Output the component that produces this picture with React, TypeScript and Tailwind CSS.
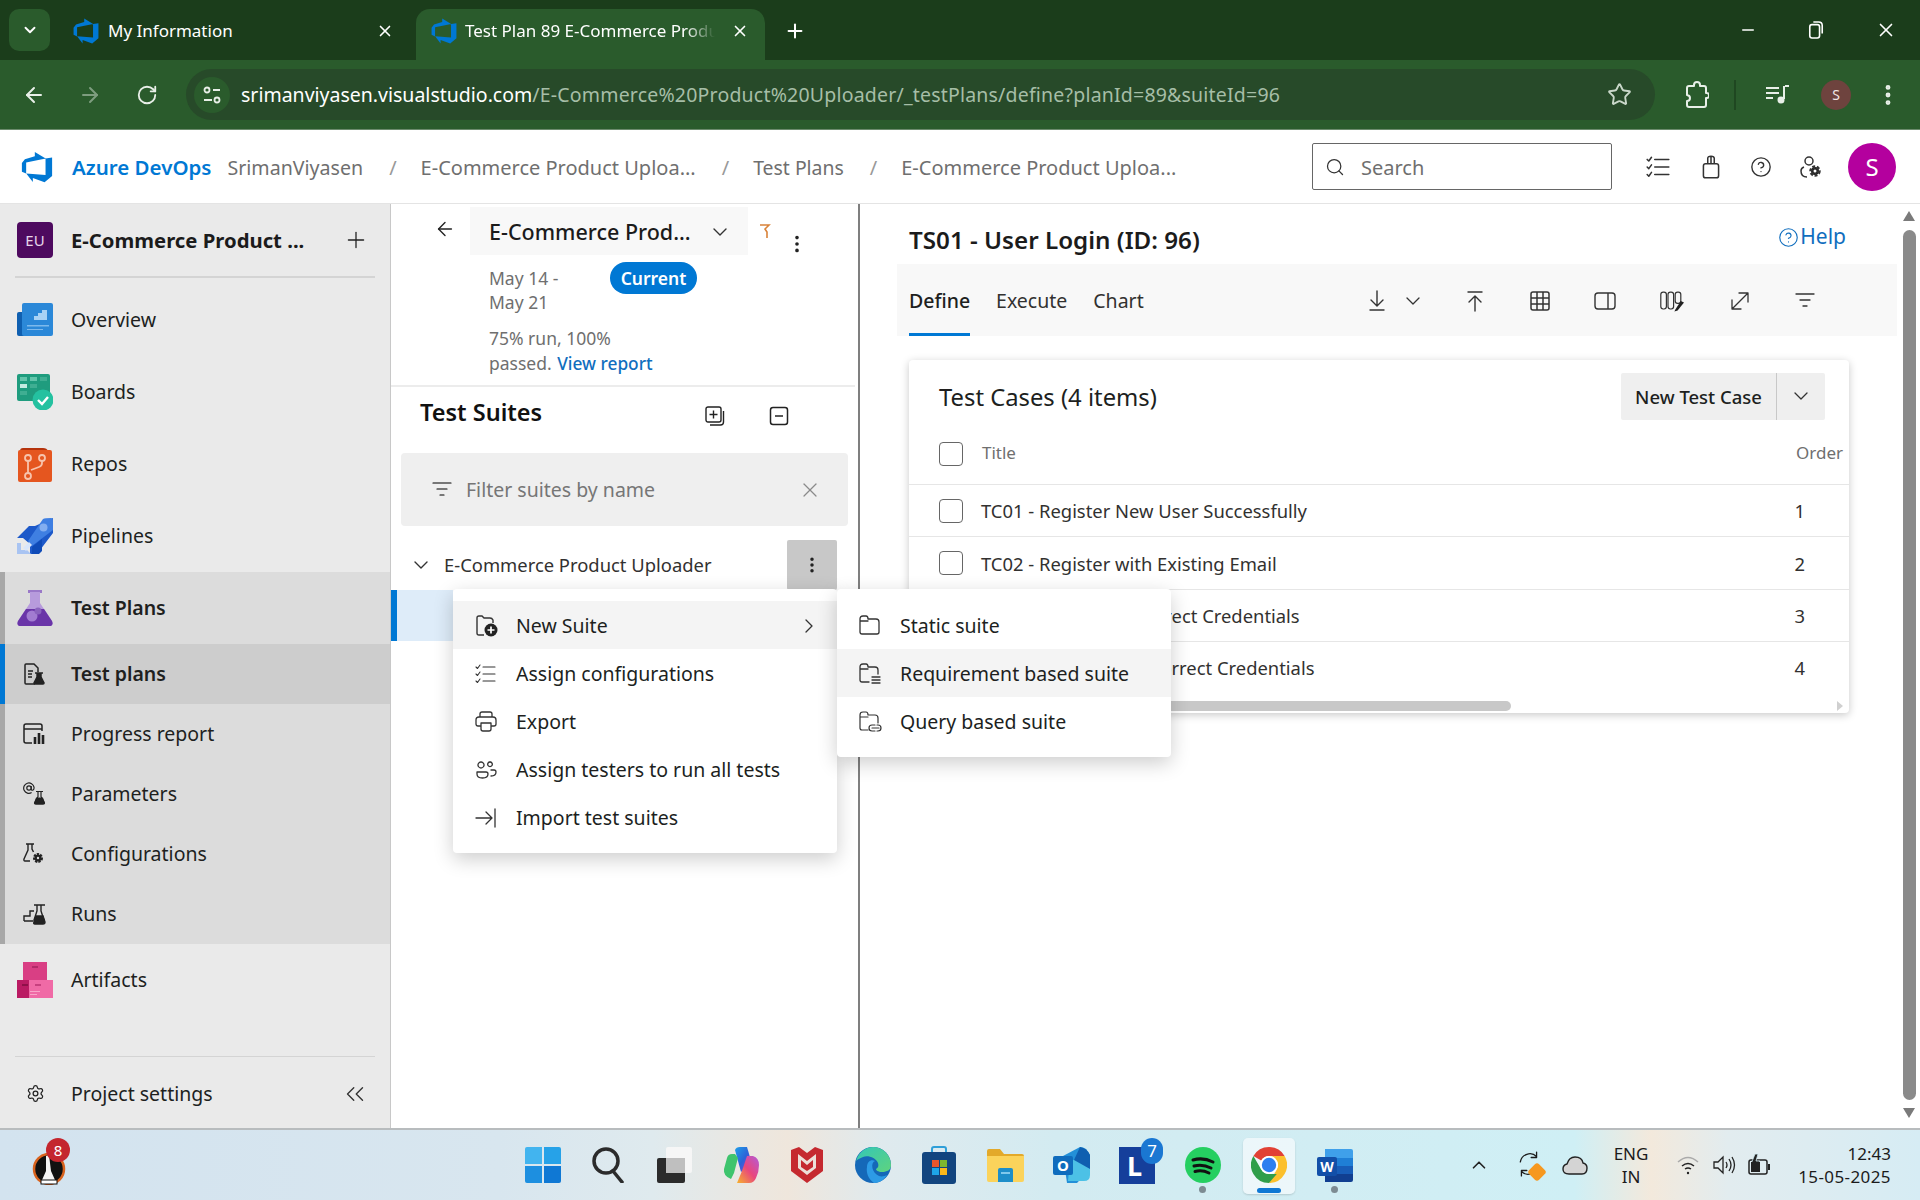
import {
  ArrowLeft,
  ArrowRight,
  ChevronDown,
  ChevronRight,
  ChevronUp,
  ChevronsLeft,
  CircleHelp,
  EllipsisVertical,
  Minus,
  Plus,
  RotateCw,
  Search,
  Settings,
  Star,
  X,
} from "lucide-react";

function AzureLogo({ className }: { className?: string }) {
  return (
    <svg viewBox="0 0 18 18" className={className} fill="#0078d4">
      <path d="M17 4v9.74l-4 3.28-6.2-2.26V17l-3.51-4.59 10.23.8V4.44zm-3.41.49L7.85 1v2.29L2.58 4.84 1 6.87v4.61l2.26 1V6.57z" />
    </svg>
  );
}

function Line({ d, size = 24, box = 24, w = 1.5 }: { d: string; size?: number; box?: number; w?: number }) {
  return (
    <svg width={size} height={size} viewBox={`0 0 ${box} ${box}`} fill="none" stroke="currentColor" strokeWidth={w} strokeLinecap="round" strokeLinejoin="round">
      <path d={d} />
    </svg>
  );
}

function OverviewIcon() {
  return (
    <svg width="36" height="36" viewBox="0 0 36 36">
      <rect x="0" y="10" width="12" height="24" rx="2" fill="#0f5fb0" />
      <rect x="5" y="1" width="31" height="33" rx="2" fill="#2b88d8" />
      <path d="M12 18h5v-4h4v-3h4v-3h5v10z" fill="#a8d2f5" />
      <path d="M10 23h22v1.5H10zM10 27h16v1H10z" fill="#7db9ec" />
    </svg>
  );
}
function BoardsIcon() {
  return (
    <svg width="36" height="36" viewBox="0 0 36 36">
      <rect x="0" y="0" width="33" height="27" rx="2" fill="#1f9c7e" />
      <rect x="3" y="3" width="7" height="4" fill="#63c5ab" />
      <rect x="13" y="3" width="7" height="4" fill="#63c5ab" />
      <rect x="23" y="3" width="7" height="4" fill="#3fae92" />
      <rect x="3" y="10" width="7" height="4" fill="#c3ebe0" />
      <rect x="13" y="10" width="7" height="4" fill="#3fae92" />
      <rect x="3" y="17" width="7" height="4" fill="#3fae92" />
      <circle cx="26" cy="26" r="10.5" fill="#24c1a0" />
      <path d="M21 26l4 4 6-7" fill="none" stroke="#fff" strokeWidth="2.4" />
    </svg>
  );
}
function ReposIcon() {
  return (
    <svg width="36" height="36" viewBox="0 0 36 36">
      <path d="M3 5q0-3 3-3h20q4 0 5 3z" fill="#b5330c" />
      <rect x="1" y="4" width="34" height="32" rx="2" fill="#e5561f" />
      <g fill="none" stroke="#f7c3ac" strokeWidth="1.8">
        <circle cx="11" cy="12" r="3" />
        <circle cx="25" cy="12" r="3" />
        <circle cx="11" cy="30" r="3" />
        <path d="M11 15v12M25 15v2q0 3-3 4l-8 3" />
      </g>
    </svg>
  );
}
function PipelinesIcon() {
  return (
    <svg width="36" height="36" viewBox="0 0 36 36">
      <path d="M36 0v15L20 36H13V26L6 20H0l12-12h6z" fill="#1d59c9" />
      <path d="M11 23L26 1q2-1 8-1 2 0 2 2v10L15 28z" fill="#3f7fe2" />
      <path d="M22 36l3-3v-12l-10 8v7z" fill="#0f4bb8" />
      <circle cx="26.5" cy="9.5" r="4" fill="#83aef0" />
      <path d="M0 36V25h4v7h6l4 4z" fill="#a9c4f2" />
      <path d="M6 30l6-6 3 3-6 6z" fill="#d9e6fb" />
    </svg>
  );
}
function FlaskIcon() {
  return (
    <svg width="36" height="36" viewBox="0 0 36 36">
      <rect x="11" y="0" width="14" height="3" fill="#9a78c8" />
      <path d="M13 2h10v11l12 18q2 5-3 5H4q-5 0-3-5l12-18z" fill="#b79bdc" />
      <path d="M9 19h18l8 12q2 5-3 5H4q-5 0-3-5z" fill="#6a35a8" />
      <circle cx="15" cy="26" r="5.5" fill="#a27cd1" />
      <circle cx="21" cy="21" r="3.5" fill="#8a63bd" />
    </svg>
  );
}
function ArtifactsIcon() {
  return (
    <svg width="36" height="36" viewBox="0 0 36 36">
      <rect x="6" y="0" width="24" height="18" fill="#d93f84" />
      <rect x="0" y="18" width="14" height="18" fill="#ba1b63" />
      <rect x="12" y="18" width="24" height="18" fill="#f06aa6" />
      <rect x="15" y="4" width="6" height="2" fill="#b32a69" />
      <rect x="5" y="22" width="6" height="2" fill="#8f1049" />
      <rect x="18" y="22" width="6" height="2" fill="#c7417f" />
      <path d="M13 29h10v1H13zM13 32h7v1h-7z" fill="#f9a6c9" />
    </svg>
  );
}

function SubIcon({ kind }: { kind: string }) {
  if (kind === "plans")
    return (
      <svg width="22" height="22" viewBox="0 0 22 22" fill="none" stroke="#222" strokeWidth="1.5">
        <path d="M12 21H3q-1 0-1-1V2q0-1 1-1h8l4 4v4" />
        <path d="M5 8h5M5 11h4M5 14h4" />
        <path d="M12 10h8M14 10v4l-3 6q0 1 1 1h8q1 0 1-1l-3-6v-4" fill="#222" />
      </svg>
    );
  if (kind === "report")
    return (
      <svg width="22" height="22" viewBox="0 0 22 22" fill="none" stroke="#222" strokeWidth="1.5">
        <path d="M9 20H3q-2 0-2-2V3q0-2 2-2h14q2 0 2 2v5M1 6h18" />
        <path d="M12 21v-7M16 21V10M20 21v-9" strokeWidth="2.6" />
      </svg>
    );
  if (kind === "params")
    return (
      <svg width="24" height="24" viewBox="0 0 24 24" fill="none" stroke="#222" strokeWidth="1.2">
        <circle cx="6" cy="6" r="2.2" />
        <path d="M8.2 4v3q0 1.5 1.6 1.2 1.5-.6 1.2-3A5.2 5.2 0 1 0 8.6 10.6" />
        <path d="M13 9.5h7M15 9.5v5l-3 6q0 1.5 1 1.5h7q1 0 1-1.5l-3-6v-5" />
        <path d="M13.5 16h6l2 5q0 1-1 1h-8q-1 0-1-1z" fill="#222" />
      </svg>
    );
  if (kind === "config")
    return (
      <svg width="22" height="22" viewBox="0 0 22 22" fill="none" stroke="#222" strokeWidth="1.4">
        <path d="M3 1h8M5 1v6L1 16q-.5 2 1 2h5M9 1v5l1.5 3" />
        <circle cx="15" cy="15" r="3.5" fill="#222" strokeWidth="3" strokeDasharray="2 1" />
        <circle cx="15" cy="15" r="1.2" fill="#ddd" stroke="none" />
      </svg>
    );
  return (
    <svg width="24" height="22" viewBox="0 0 24 22" fill="none" stroke="#222" strokeWidth="1.4">
      <path d="M1 18v-5h6V8h4M1 18h9" />
      <path d="M11 2h11M14 2v6l-3 9q0 2 1 2h8q1 0 1-2l-3-9V2" />
      <path d="M13 13h7l2 6q0 2-2 2h-8q-2 0-1-2z" fill="#222" />
    </svg>
  );
}

function NavItem({ icon, label }: { icon: React.ReactNode; label: string }) {
  return (
    <div className="flex h-[72px] items-center pl-[17px]">
      <div className="flex w-[54px] shrink-0 items-center">{icon}</div>
      <span className="text-[19.5px] text-[#201f1e]">{label}</span>
    </div>
  );
}

function SubItem({ kind, label }: { kind: string; label: string }) {
  return (
    <div className="flex h-[60px] items-center border-l-[5px] border-[#0078d4] bg-[#cdcdcd] pl-[18px]">
      <div className="flex w-[48px] shrink-0 items-center">
        <SubIcon kind={kind} />
      </div>
      <span className="text-[19.5px] font-semibold text-[#201f1e]">{label}</span>
    </div>
  );
}

function SubItemPlain({ kind, label }: { kind: string; label: string }) {
  return (
    <div className="flex h-[60px] items-center pl-[18px]">
      <div className="flex w-[48px] shrink-0 items-center">
        <SubIcon kind={kind} />
      </div>
      <span className="text-[19.5px] text-[#201f1e]">{label}</span>
    </div>
  );
}

function Sidebar() {
  return (
    <aside className="flex w-[391px] shrink-0 flex-col border-r border-[#c8c8c8] bg-[#eaeaea]">
      <div className="flex h-[72px] items-center pl-[17px]">
        <div className="flex h-[36px] w-[36px] items-center justify-center rounded-[4px] bg-[#4e0a5f] text-[15px] text-[#e6d5ea]">EU</div>
        <span className="ml-[18px] text-[20.3px] font-bold text-[#1b1b1b]">E-Commerce Product ...</span>
        <Plus className="ml-auto mr-[21px] h-[26px] w-[26px] text-[#222]" strokeWidth={1.2} />
      </div>
      <div className="mx-[15px] h-[2px] bg-[#d4d4d4]" />
      <div className="h-[6px]" />
      <NavItem icon={<OverviewIcon />} label="Overview" />
      <NavItem icon={<BoardsIcon />} label="Boards" />
      <NavItem icon={<ReposIcon />} label="Repos" />
      <NavItem icon={<PipelinesIcon />} label="Pipelines" />
      <div className="border-l-[5px] border-[#a8a8a8] bg-[#dcdcdc]">
        <div className="flex h-[72px] items-center pl-[12px]">
          <div className="flex w-[54px] shrink-0 items-center">
            <FlaskIcon />
          </div>
          <span className="text-[19.5px] font-semibold text-[#201f1e]">Test Plans</span>
        </div>
        <div className="-ml-[5px]">
          <SubItem kind="plans" label="Test plans" />
        </div>
        <SubItemPlain kind="report" label="Progress report" />
        <SubItemPlain kind="params" label="Parameters" />
        <SubItemPlain kind="config" label="Configurations" />
        <SubItemPlain kind="runs" label="Runs" />
      </div>
      <NavItem icon={<ArtifactsIcon />} label="Artifacts" />
      <div className="mx-[15px] mt-auto h-px bg-[#d4d4d4]" />
      <div className="flex h-[71px] items-center pl-[26px] pt-[2px]">
        <Settings className="h-[19px] w-[19px] text-[#222]" strokeWidth={1.6} />
        <span className="ml-[26px] text-[19.5px] text-[#201f1e]">Project settings</span>
        <ChevronsLeft className="ml-auto mr-[20px] h-[30px] w-[30px] text-[#333]" strokeWidth={1.1} />
      </div>
    </aside>
  );
}

function SuitesPanel() {
  return (
    <section className="flex w-[469px] shrink-0 flex-col border-r-2 border-[#7f7f7f] bg-white">
      <div className="flex h-[51px] pl-[43px] pt-[3px]">
        <ArrowLeft className="mt-[11px] h-[22px] w-[22px] text-[#222]" strokeWidth={1.5} />
        <div className="ml-[14px] flex h-[48px] w-[278px] items-center bg-[#f8f8f8] pl-[19px] pt-[2px]">
          <span className="text-[21.5px] font-medium text-[#1b1b1b]">E-Commerce Prod...</span>
          <ChevronDown className="ml-auto mr-[16px] h-[24px] w-[24px] text-[#333]" strokeWidth={1.4} />
        </div>
        <svg width="12" height="16" viewBox="0 0 12 16" className="ml-[11px] mt-[16px]" fill="none" stroke="#d9833a" strokeWidth="1.6">
          <path d="M1 2h9L6 6l2 3v6" />
        </svg>
        <EllipsisVertical className="ml-[15px] mt-[26px] h-[22px] w-[22px] text-[#222]" strokeWidth={2} />
      </div>
      <div className="h-[132px] w-[464px] border-b-2 border-[#ececec] pl-[98px] text-[17.5px] leading-[24px] text-[#6f6f6f]">
        <div className="flex">
          <div className="w-[121px] pt-[11px]">
            May 14 -<br />
            May 21
          </div>
          <div className="mt-[7px] flex h-[32px] w-[87px] items-center justify-center rounded-full bg-[#0078d4] text-[17.5px] font-semibold text-white">Current</div>
        </div>
        <div className="mt-[12px] leading-[25px]">
          75% run, 100%
          <br />
          passed. <span className="ml-[1px] text-[17.3px] font-medium text-[#106ebe]">View report</span>
        </div>
      </div>
      <div className="flex h-[66px] items-center pb-[15px] pl-[29px]">
        <span className="text-[23.5px] font-semibold text-[#111]">Test Suites</span>
        <svg width="20" height="20" viewBox="0 0 20 20" className="ml-[163px] mt-[6px]" fill="none" stroke="#222" strokeWidth="1.4">
          <rect x="1" y="1" width="15" height="15" rx="2" />
          <path d="M8.5 4.5v8M4.5 8.5h8M18.5 5v11q0 3-3 3H5" />
        </svg>
        <svg width="20" height="20" viewBox="0 0 20 20" className="ml-[44px] mt-[7px]" fill="none" stroke="#222" strokeWidth="1.5">
          <rect x="1.5" y="1.5" width="17" height="17" rx="2.5" />
          <path d="M6 10h8" />
        </svg>
      </div>
      <div className="mx-[10px] flex h-[73px] w-[447px] items-center rounded-[4px] bg-[#efefef] pl-[31px]">
        <Line d="M1 3h18M5 9h10M8 15h4" size={20} box={20} w={1.2} />
        <span className="ml-[14px] text-[19.5px] text-[#767676]">Filter suites by name</span>
        <X className="ml-auto mr-[26px] h-[24px] w-[24px] text-[#8a8a8a]" strokeWidth={1.2} />
      </div>
      <div className="flex h-[64px] items-center pl-[18px] pt-[14px]">
        <ChevronDown className="h-[24px] w-[24px] text-[#333]" strokeWidth={1.4} />
        <span className="ml-[11px] text-[18.4px] text-[#323130]">E-Commerce Product Uploader</span>
        <div className="ml-auto mr-[21px] flex h-[50px] w-[50px] items-center justify-center rounded-[2px] bg-[#c8c8c8]">
          <EllipsisVertical className="h-[20px] w-[20px] text-[#222]" strokeWidth={2.2} />
        </div>
      </div>
      <div className="h-[51px] w-[62px] border-l-[6px] border-[#0078d4] bg-[#deecf9]" />
    </section>
  );
}

function MenuRow({ icon, label, active, chevron }: { icon: React.ReactNode; label: string; active?: boolean; chevron?: boolean }) {
  return (
    <div className={`flex h-[48px] items-center pl-[21px] pt-[1px] ${active ? "bg-[#f4f4f4]" : ""}`}>
      <div className="flex w-[42px] shrink-0 items-center text-[#333]">{icon}</div>
      <span className="text-[19.5px] text-[#201f1e]">{label}</span>
      {chevron && <ChevronRight className="ml-auto mr-[16px] h-[24px] w-[24px] text-[#333]" strokeWidth={1.3} />}
    </div>
  );
}

function Menus() {
  return (
    <>
      <div className="absolute left-[453px] top-[385px] w-[384px] rounded-[4px] bg-white py-[12px] shadow-[0_6px_20px_rgba(0,0,0,0.2)]">
        <MenuRow
          active
          chevron
          label="New Suite"
          icon={
            <svg width="24" height="24" viewBox="0 0 24 24" fill="none" stroke="#333" strokeWidth="1.4">
              <path d="M10 21H5q-2 0-2-2V4q0-2 2-2h3l2 2h6q2 0 3 2v3" />
              <circle cx="17" cy="16" r="6.5" fill="#222" stroke="none" />
              <path d="M17 12.5v7M13.5 16h7" stroke="#fff" strokeWidth="1.7" />
            </svg>
          }
        />
        <MenuRow label="Assign configurations" icon={<Line d="M2 5l1.5 1.5L6 3M2 12l1.5 1.5L6 10M2 19l1.5 1.5L6 17M9 5h12M9 12h12M9 19h12" w={1.1} />} />
        <MenuRow label="Export" icon={<Line d="M6 7V4q0-2 2-2h8q2 0 2 2v3M6 16H4q-2 0-2-2v-4q0-3 3-3h14q3 0 3 3v4q0 2-2 2h-2M7 13h10v6q0 2-2 2H9q-2 0-2-2z" w={1.3} />} />
        <MenuRow label="Assign testers to run all tests" icon={<Line d="M7 4a3 3 0 1 0 .01 0M16 4a2.3 2.3 0 1 0 .01 0M3 14h9q2 0 2 2 0 4-5.5 4T3 16q0-2 0-2zM17 12h3q2 0 2 2 0 4-5 4" w={1.3} />} />
        <MenuRow label="Import test suites" icon={<Line d="M2 12h15M12 6l6 6-6 6M21 3v18" w={1.3} />} />
      </div>
      <div className="absolute left-[837px] top-[385px] w-[334px] rounded-[4px] bg-white py-[12px] shadow-[0_6px_20px_rgba(0,0,0,0.2)]">
        <MenuRow label="Static suite" icon={<Line d="M2 18V5q0-3 3-3h3q2 0 2 3h8q3 0 3 3v10q0 2-2 2H4q-2 0-2-2zM2 7h8" w={1.3} />} />
        <MenuRow active label="Requirement based suite" icon={<Line d="M11 20H4q-2 0-2-2V5q0-3 3-3h3q2 0 2 3h7q3 0 3 3v4M2 7h8M14 15h8M14 18h8M14 21h8" w={1.3} />} />
        <MenuRow label="Query based suite" icon={<Line d="M10 20H4q-2 0-2-2V5q0-3 3-3h3q2 0 2 3h7q3 0 3 3v5M2 7h8M17 15h-3a3 3 0 0 0 0 6h3M19 15h1a3 3 0 0 1 0 6h-1M14 18h7" w={1.2} />} />
      </div>
    </>
  );
}

function ToolIcon({ children, className }: { children: React.ReactNode; className?: string }) {
  return <div className={`flex w-[24px] items-center justify-center text-[#333] ${className ?? ""}`}>{children}</div>;
}

function CaseRow({ title, order }: { title: string; order: number }) {
  return (
    <div className="flex h-[52.3px] items-center border-t border-[#e6e6e6] pl-[30px]">
      <div className="h-[24px] w-[24px] rounded-[4px] border border-[#666]" />
      <span className="ml-[18px] pt-[1px] text-[18.4px] text-[#323130]">{title}</span>
      <span className="ml-auto mr-[44px] pt-[1px] text-[18.4px] text-[#323130]">{order}</span>
    </div>
  );
}

function RightPanel() {
  return (
    <section className="flex flex-1 bg-white">
      <div className="w-[1041px] pl-[37px]">
        <div className="flex h-[60px] items-center pl-[12px] pr-[55px] pt-[12px]">
          <span className="text-[24.2px] font-semibold text-[#1b1b1b]">TS01 - User Login (ID: 96)</span>
          <span className="ml-auto flex items-center gap-[1px] pb-[6px] text-[21px] text-[#106ebe]">
            <CircleHelp className="h-[21px] w-[21px]" strokeWidth={1.3} />
            Help
          </span>
        </div>
        <div className="flex h-[72px] w-[1000px] items-center bg-[#f8f8f8] pl-[12px]">
          <div className="relative flex h-full items-center pt-[2px] text-[19.5px] font-medium text-[#201f1e]">
            Define
            <div className="absolute bottom-0 left-0 right-0 h-[3px] bg-[#0078d4]" />
          </div>
          <span className="ml-[26px] pt-[2px] text-[19.5px] text-[#323130]">Execute</span>
          <span className="ml-[26px] pt-[2px] text-[19.5px] text-[#323130]">Chart</span>
          <div className="flex items-center pt-[1px]">
            <ToolIcon className="ml-[221px]">
              <Line d="M12 2v14M6 11l6 6 6-6M5 21h14" w={1.4} />
            </ToolIcon>
            <ToolIcon className="ml-[12px]">
              <ChevronDown className="h-[24px] w-[24px]" strokeWidth={1.3} />
            </ToolIcon>
            <ToolIcon className="ml-[38px]">
              <Line d="M5 3h14M12 22V8M6 13l6-6 6 6" w={1.4} />
            </ToolIcon>
            <ToolIcon className="ml-[41px]">
              <Line d="M5 3h14q2 0 2 2v14q0 2-2 2H5q-2 0-2-2V5q0-2 2-2zM3 9h18M3 15h18M9 3v18M15 3v18" w={1.5} />
            </ToolIcon>
            <ToolIcon className="ml-[41px]">
              <Line d="M5 4h14q3 0 3 3v10q0 3-3 3H5q-3 0-3-3V7q0-3 3-3zM15 4v16" w={1.4} />
            </ToolIcon>
            <ToolIcon className="ml-[43px]">
              <svg width="30" height="26" viewBox="0 0 30 26" fill="none" stroke="#333" strokeWidth="1.5">
                <rect x="1" y="2" width="7" height="21" rx="3" />
                <rect x="10" y="2" width="7" height="21" rx="3" />
                <rect x="19" y="2" width="7" height="14" rx="3" />
                <path d="M19 24l7-11 4 2-8 10-4 1z" fill="#222" stroke="none" />
              </svg>
            </ToolIcon>
            <ToolIcon className="ml-[44px]">
              <Line d="M4 20L20 4M11 4h9v9M4 11v9h9" w={1.3} />
            </ToolIcon>
            <ToolIcon className="ml-[41px]">
              <Line d="M3 5h18M7 11h10M10 17h4" w={1.3} />
            </ToolIcon>
          </div>
        </div>
        <div className="ml-[12px] mt-[24px] h-[353px] w-[940px] rounded-[4px] bg-white shadow-[0_2px_8px_rgba(0,0,0,0.22)]">
          <div className="flex h-[72px] items-center pl-[30px] pr-[24px]">
            <span className="pt-[3px] text-[23.8px] text-[#201f1e]">Test Cases (4 items)</span>
            <div className="ml-auto flex h-[47px] w-[204px] items-center rounded-[2px] bg-[#efefef] text-[18.5px] font-medium text-[#201f1e]">
              <span className="flex h-full w-[156px] items-center justify-center border-r border-[#c8c8c8] pt-[1px]">New Test Case</span>
              <ChevronDown className="ml-[12px] h-[24px] w-[24px] text-[#333]" strokeWidth={1.3} />
            </div>
          </div>
          <div className="flex h-[52px] items-center pb-[8px] pl-[30px] pr-[6px]">
            <div className="h-[24px] w-[24px] rounded-[4px] border border-[#666]" />
            <span className="mb-[2px] ml-[19px] text-[17px] text-[#6f6f6f]">Title</span>
            <span className="mb-[2px] ml-auto text-[17px] text-[#6f6f6f]">Order</span>
          </div>
          <CaseRow title="TC01 - Register New User Successfully" order={1} />
          <CaseRow title="TC02 - Register with Existing Email" order={2} />
          <CaseRow title="TC03 - Login with Correct Credentials" order={3} />
          <CaseRow title="TC04 - Login with Incorrect Credentials" order={4} />
          <div className="mt-[8px] flex items-center pl-[32px] pr-[6px]">
            <div className="h-[10px] w-[570px] rounded-full bg-[#c8c8c8]" />
            <svg width="6" height="10" viewBox="0 0 6 10" className="ml-auto" fill="#d0d0d0">
              <path d="M0 0l6 5-6 5z" />
            </svg>
          </div>
        </div>
      </div>
      <div className="flex w-[16px] flex-col items-center pt-[7px]">
        <svg width="14" height="10" viewBox="0 0 14 10" fill="#7a7a7a">
          <path d="M7 0l6 10H1z" />
        </svg>
        <div className="mt-[9px] h-[870px] w-[13px] rounded-full bg-[#8a8a8a]" />
        <svg width="14" height="10" viewBox="0 0 14 10" className="mt-[8px]" fill="#7a7a7a">
          <path d="M7 10L1 0h12z" />
        </svg>
      </div>
    </section>
  );
}

function WindowsIcon() {
  return (
    <svg width="36" height="36" viewBox="0 0 36 36">
      <path d="M0 2q0-2 2-2h15v17H0z" fill="#42b4ef" />
      <path d="M19 0h15q2 0 2 2v15H19z" fill="#26a2e8" />
      <path d="M0 19h17v17H2q-2 0-2-2z" fill="#1d8fe0" />
      <path d="M19 19h17v15q0 2-2 2H19z" fill="#0f78d4" />
    </svg>
  );
}

function ChromeIcon() {
  return (
    <svg width="36" height="36" viewBox="0 0 36 36">
      <path d="M18 0a18 18 0 0 1 15.6 9H18a9 9 0 0 0-7.8 4.5L2.4 9A18 18 0 0 1 18 0z" fill="#e14135" />
      <path d="M33.6 9a18 18 0 0 1-15.6 27l7.8-13.5A9 9 0 0 0 18 9z" fill="#fbc02d" />
      <path d="M18 36A18 18 0 0 1 2.4 9l7.8 13.5a9 9 0 0 0 7.8 4.5h7.8z" fill="#2f9e4a" />
      <circle cx="18" cy="18" r="9" fill="#fff" />
      <circle cx="18" cy="18" r="7.2" fill="#2d7ff0" />
    </svg>
  );
}

function Slot({ children, dot, active }: { children: React.ReactNode; dot?: boolean; active?: boolean }) {
  return (
    <div className="relative flex h-full w-[66px] items-center justify-center">
      {active && <div className="absolute left-[7px] top-[8px] h-[56px] w-[52px] rounded-[5px] bg-[#f2f9fb]/80 shadow-[0_1px_2px_rgba(0,0,0,0.15)]" />}
      <div className="relative">{children}</div>
      {dot && <div className="absolute bottom-[7px] left-[29px] h-[7px] w-[7px] rounded-full bg-[#7d8b92]" />}
      {active && <div className="absolute bottom-[7px] left-[21px] h-[5px] w-[24px] rounded-full bg-[#0f78d4]" />}
    </div>
  );
}

function Taskbar() {
  return (
    <footer className="flex h-[72px] shrink-0 items-center border-t-2 border-[#b8bcbe] bg-[linear-gradient(90deg,#d3e3ef_0%,#d8e6ef_26%,#dfeaee_34%,#efe6dc_41%,#dfeaee_46%,#d3ebf1_55%,#cfeff5_82%,#f3e9dc_86%,#e2ecef_90%,#d6ecf4_100%)] text-[#1b1b1b]">
      <div className="relative h-full w-[510px] pl-[32px]">
        <svg width="34" height="32" viewBox="0 0 34 32" className="mt-[23px]">
          <circle cx="17" cy="16" r="15" fill="#111" stroke="#d9631e" strokeWidth="2.5" />
          <path d="M14 3l3-1 2 16 4 9H10l4-9z" fill="#f5f5f5" />
          <rect x="9" y="27" width="16" height="4" fill="#fff" stroke="#111" />
        </svg>
        <div className="absolute left-[46px] top-[8px] flex h-[24px] w-[24px] items-center justify-center rounded-full bg-[#c4262e] text-[15px] text-white">8</div>
      </div>
      <div className="flex h-full">
        <Slot>
          <WindowsIcon />
        </Slot>
        <Slot>
          <svg width="36" height="36" viewBox="0 0 36 36" fill="none" stroke="#2b2b2b" strokeWidth="3.5">
            <circle cx="15" cy="14" r="12" />
            <path d="M22 24l9 11" strokeLinecap="round" />
          </svg>
        </Slot>
        <Slot>
          <svg width="36" height="36" viewBox="0 0 36 36">
            <rect x="9" y="0" width="26" height="26" rx="2" fill="#f6f6f6" />
            <rect x="0" y="11" width="28" height="25" rx="2" fill="#2b2b2b" />
            <rect x="9" y="11" width="19" height="15" fill="#bfbfbf" />
          </svg>
        </Slot>
        <Slot>
          <svg width="36" height="36" viewBox="0 0 36 36">
            <defs>
              <linearGradient id="cop1" x1="0" y1="0" x2="1" y2="1">
                <stop offset="0" stopColor="#1f9fe8" />
                <stop offset="0.5" stopColor="#2c63d8" />
                <stop offset="1" stopColor="#a83ed0" />
              </linearGradient>
              <linearGradient id="cop2" x1="0" y1="1" x2="1" y2="0">
                <stop offset="0" stopColor="#f7b32b" />
                <stop offset="0.5" stopColor="#e9477d" />
                <stop offset="1" stopColor="#b35bd9" />
              </linearGradient>
            </defs>
            <path d="M12 3q1-3 5-3h7l5 17-11 8z" fill="url(#cop1)" />
            <path d="M4 11q1-4 5-4h3l3 4-4 15-3 6q-8-3-7-10z" fill="#3ec46d" />
            <path d="M30 9q6 2 6 9 0 7-3 13-2 5-7 5h-12l5-12 5-15z" fill="url(#cop2)" />
          </svg>
        </Slot>
        <Slot>
          <svg width="32" height="36" viewBox="0 0 32 36">
            <path d="M0 3l8-3 8 6 8-6 8 3v21L16 36 0 24z" fill="#c5292f" />
            <path d="M7 7l9 7 9-7v14l-9 7-9-7z" fill="#ecdfd8" />
            <path d="M10 13l6 5 6-5v7l-6 4-6-4z" fill="#c5292f" />
          </svg>
        </Slot>
        <Slot>
          <svg width="36" height="36" viewBox="0 0 36 36">
            <defs>
              <linearGradient id="edge1" x1="0" y1="0" x2="1" y2="1">
                <stop offset="0" stopColor="#33c6b8" />
                <stop offset="1" stopColor="#5fd47e" />
              </linearGradient>
            </defs>
            <circle cx="18" cy="18" r="18" fill="#1568b8" />
            <path d="M1 14C4 4 12 0 18 0c10 0 18 8 18 18 0 5-4 7-9 7-4 0-6-2-6-3 2-1 3-3 2-6-2-5-10-8-15-6-3 1-6 3-7 4z" fill="url(#edge1)" />
            <path d="M12 20c0-5 4-8 8-6-5 2-3 12 4 15 3 1 6 0 8-1-3 5-8 8-13 8C13 32 11 25 12 20z" fill="#2d9be6" />
          </svg>
        </Slot>
        <Slot>
          <svg width="34" height="38" viewBox="0 0 34 38">
            <path d="M10 6V3q0-2 2-2h10q2 0 2 2v3" fill="none" stroke="#2f9fd8" strokeWidth="2" />
            <rect x="0" y="6" width="34" height="32" rx="3" fill="#12457f" />
            <rect x="10" y="14" width="7" height="7" fill="#e8552c" />
            <rect x="18" y="14" width="7" height="7" fill="#7db72e" />
            <rect x="10" y="22" width="7" height="7" fill="#1ea5e8" />
            <rect x="18" y="22" width="7" height="7" fill="#fbb81a" />
          </svg>
        </Slot>
        <Slot>
          <svg width="37" height="33" viewBox="0 0 37 33">
            <path d="M0 2q0-2 2-2h11l4 5h18q2 0 2 2v8H0z" fill="#e3a92a" />
            <path d="M0 7h37v24q0 2-2 2H2q-2 0-2-2z" fill="#fbd35b" />
            <path d="M11 21q0-2 2-2h11q2 0 2 2v12H11z" fill="#1d8ec9" />
            <rect x="14" y="23" width="9" height="2" fill="#7fc9ec" />
          </svg>
        </Slot>
        <Slot>
          <svg width="37" height="36" viewBox="0 0 37 36">
            <path d="M10 9L27 0q3 0 6 2l4 6v14L24 36H14z" fill="#2390d8" />
            <path d="M17 14l20-6v20q0 6-6 6H15z" fill="#4cc1e6" />
            <path d="M37 8v14L21 13 27 0q7 1 10 8z" fill="#0f5fb0" />
            <rect x="0" y="9" width="20" height="19" rx="2" fill="#0f6cbd" />
            <text x="10" y="24" textAnchor="middle" fontSize="15" fontWeight="700" fill="#fff" fontFamily="Noto Sans, sans-serif">O</text>
          </svg>
        </Slot>
        <Slot>
          <div className="relative h-[37px] w-[36px] bg-[#153f9b] pl-[8px] text-[27px] font-bold leading-[38px] text-white">
            L
            <div className="absolute -right-[8px] -top-[9px] flex h-[26px] w-[22px] items-center justify-center rounded-full bg-[#1a77d2] text-[17px] font-normal leading-none">7</div>
          </div>
        </Slot>
        <Slot dot>
          <svg width="36" height="36" viewBox="0 0 36 36" fill="none" stroke="#111" strokeWidth="3" strokeLinecap="round">
            <circle cx="18" cy="18" r="18" fill="#25cf61" stroke="none" />
            <path d="M8 13q10-3 20 2M9 19q9-2 17 2M10 24.5q7-2 14 1.5" />
          </svg>
        </Slot>
        <Slot active>
          <ChromeIcon />
        </Slot>
        <Slot dot>
          <svg width="36" height="33" viewBox="0 0 36 33">
            <path d="M8 0h26q2 0 2 2v7H8z" fill="#3fa0ea" />
            <rect x="8" y="9" width="28" height="8" fill="#1f7fd6" />
            <rect x="8" y="17" width="28" height="8" fill="#185db8" />
            <path d="M8 25h28v6q0 2-2 2H8z" fill="#113f91" />
            <rect x="0" y="8" width="20" height="19" rx="2" fill="#124fa8" />
            <text x="10" y="23" textAnchor="middle" fontSize="14" fontWeight="700" fill="#fff" fontFamily="Noto Sans, sans-serif">W</text>
          </svg>
        </Slot>
      </div>
      <ChevronUp className="ml-[100px] h-[22px] w-[22px] text-[#222]" strokeWidth={1.8} />
      <div className="relative ml-[26px] h-[28px] w-[28px]">
        <Line d="M4 10a9 9 0 0 1 15-5M19 1v5h-5M20 14a9 9 0 0 1-15 5M5 23v-5h5" size={26} w={1.2} />
        <div className="absolute bottom-0 right-0 h-[14px] w-[14px] rotate-45 rounded-[3px] bg-[#f6981f]" />
      </div>
      <svg width="26" height="20" viewBox="0 0 26 20" className="ml-[18px]" fill="#d4d4d4" stroke="#222" strokeWidth="1.4">
        <path d="M7 19q-6 0-6-5 0-4 4-5 2-7 8-7 7 0 8 6 4 1 4 5 0 6-5 6z" />
      </svg>
      <div className="ml-[18px] w-[50px] text-center text-[17px] leading-[23px]">
        ENG
        <br />
        IN
      </div>
      <svg width="22" height="20" viewBox="0 0 22 20" className="ml-[21px]" fill="none" stroke="#222" strokeWidth="1.5">
        <path d="M1 7q10-9 20 0" stroke="#aaa" />
        <path d="M5 11q6-5 12 0M8 14q3-2 6 0" />
        <circle cx="11" cy="18" r="1.2" fill="#222" stroke="none" />
      </svg>
      <svg width="24" height="22" viewBox="0 0 24 22" className="ml-[14px]" fill="none" stroke="#222" strokeWidth="1.3">
        <path d="M1 8h4l5-5v16l-5-5H1zM13 8q2 3 0 6M16 5q4 6 0 12M19 3q5 8 0 16" />
      </svg>
      <svg width="24" height="24" viewBox="0 0 24 24" className="ml-[10px]" fill="none" stroke="#222" strokeWidth="1.5">
        <rect x="2" y="7" width="18" height="14" rx="2" />
        <path d="M22 11v6" strokeWidth="2" />
        <path d="M8 1L4 11h4l-2 7 7-10H9l2-7z" fill="#222" stroke="#d3ebf1" strokeWidth="0.8" />
        <rect x="4" y="9" width="9" height="10" fill="#222" stroke="none" />
      </svg>
      <div className="ml-auto pr-[29px] text-right text-[17px] leading-[23px]">
        12:43
        <br />
        <span className="tracking-[0.4px]">15-05-2025</span>
      </div>
    </footer>
  );
}

export default function App() {
  return (
    <div className="flex h-[1200px] w-[1920px] flex-col overflow-hidden bg-white font-['Noto_Sans','Open_Sans',sans-serif]">
      <div className="flex h-[60px] shrink-0 bg-[#1b3d1b] pl-[9px] text-white">
        <div className="mt-[9px] flex h-[42px] w-[41px] items-center justify-center rounded-[10px] bg-[#2a5b2c]">
          <ChevronDown className="h-[18px] w-[18px]" strokeWidth={2.5} />
        </div>
        <div className="flex w-[366px] items-center pl-[22px] pt-[2px]">
          <AzureLogo className="h-[28px] w-[28px]" />
          <span className="ml-[8px] text-[17px]">My Information</span>
          <X className="ml-auto mr-[22px] h-[18px] w-[18px]" strokeWidth={2.2} />
        </div>
        <div className="mt-[9px] flex h-[51px] w-[349px] items-center rounded-t-[14px] bg-[#2a5b2c] pb-[7px] pl-[14px]">
          <AzureLogo className="h-[28px] w-[28px]" />
          <span className="ml-[7px] w-[250px] overflow-hidden whitespace-nowrap text-[17px] [mask-image:linear-gradient(to_right,black_88%,transparent)]">Test Plan 89 E-Commerce Product Uploader</span>
          <X className="ml-[16px] h-[18px] w-[18px]" strokeWidth={2.2} />
        </div>
        <Plus className="ml-[19px] mt-[20px] h-[22px] w-[22px]" strokeWidth={2.2} />
        <div className="ml-auto flex h-[60px] items-center pr-[23px]">
          <Minus className="h-[18px] w-[18px]" strokeWidth={2} />
          <svg width="16" height="20" viewBox="0 0 18 22" className="ml-[51px]" fill="none" stroke="#fff" strokeWidth="1.8">
            <rect x="2" y="5" width="11" height="15" rx="2.5" />
            <path d="M6 2h6q4 0 4 4v9" />
          </svg>
          <X className="ml-[51px] h-[22px] w-[22px]" strokeWidth={1.8} />
        </div>
      </div>
      <div className="flex h-[70px] shrink-0 items-center border-b border-[#6c8b6d] bg-[#2a5b2c] pl-[22px] text-[#e8efe8]">
        <ArrowLeft className="h-[24px] w-[24px]" strokeWidth={2} />
        <ArrowRight className="ml-[32px] h-[24px] w-[24px] text-[#7e9d7f]" strokeWidth={2} />
        <RotateCw className="ml-[34px] h-[22px] w-[22px]" strokeWidth={2} />
        <div className="ml-[28px] flex h-[51px] w-[1469px] items-center rounded-full bg-[#274a29] pl-[8px]">
          <div className="flex h-[36px] w-[36px] items-center justify-center rounded-full bg-[#2a5b2c]">
            <svg width="20" height="20" viewBox="0 0 20 20" fill="none" stroke="#e8efe8" strokeWidth="1.8">
              <circle cx="5" cy="5" r="2.5" />
              <circle cx="15" cy="15" r="2.5" />
              <path d="M11 5h7M2 15h8" />
            </svg>
          </div>
          <span className="ml-[11px] whitespace-nowrap text-[19.5px]">
            <span className="text-white">srimanviyasen.visualstudio.com</span>
            <span className="tracking-[0.2px] text-[#a6bea7]">/E-Commerce%20Product%20Uploader/_testPlans/define?planId=89&amp;suiteId=96</span>
          </span>
          <Star className="ml-auto mr-[23px] h-[25px] w-[25px] text-[#c9d7c9]" strokeWidth={1.8} />
        </div>
        <svg width="26" height="28" viewBox="0 0 26 28" className="ml-[28px]" fill="none" stroke="#e8efe8" strokeWidth="2" strokeLinejoin="round">
          <path d="M6 5h5V4q0-3 3-3t3 3v1h4q2 0 2 2v5h1q2 0 2 2.5T24 17h-1v7q0 2-2 2H6q-2 0-2-2v-4q3 0 3-3 0-2.5-3-3V7q0-2 2-2z" />
        </svg>
        <div className="ml-[25px] h-[30px] w-[2px] bg-[#1f4721]" />
        <svg width="24" height="22" viewBox="0 0 24 22" className="ml-[29px]" fill="none" stroke="#e8efe8" strokeWidth="2">
          <path d="M1 4h13M1 9h13M1 14h7M20 2h4M19 2v13" />
          <circle cx="16" cy="16" r="3.5" fill="#e8efe8" stroke="none" />
        </svg>
        <div className="ml-[32px] flex h-[30px] w-[30px] items-center justify-center rounded-full bg-[#6e433e] text-[14px] text-[#f2e8e6]">S</div>
        <EllipsisVertical className="ml-[24px] h-[26px] w-[26px]" strokeWidth={2.5} />
      </div>
      <header className="flex h-[74px] shrink-0 items-center border-b border-[#e4e4e4] bg-white pl-[20px] pt-[2px] text-[20px] text-[#6f6f6f]">
        <AzureLogo className="-mt-[2px] h-[34px] w-[34px]" />
        <span className="ml-[18px] text-[20.5px] font-semibold text-[#0078d4]">Azure DevOps</span>
        <span className="ml-[16px] text-[19.6px]">SrimanViyasen</span>
        <span className="ml-[26px] text-[#999]">/</span>
        <span className="ml-[24px]">E-Commerce Product Uploa...</span>
        <span className="ml-[26px] text-[#999]">/</span>
        <span className="ml-[24px] text-[19.4px]">Test Plans</span>
        <span className="ml-[26px] text-[#999]">/</span>
        <span className="ml-[24px]">E-Commerce Product Uploa...</span>
        <div className="-mt-[2px] ml-auto flex h-[47px] w-[300px] items-center rounded-[2px] border border-[#666] pl-[12px]">
          <Search className="h-[20px] w-[20px] text-[#333]" strokeWidth={1.5} />
          <span className="ml-[16px] pt-[2px] text-[#6f6f6f]">Search</span>
        </div>
        <div className="-mt-[2px] ml-[31px] flex w-[30px] justify-center text-[#333]">
          <Line d="M2 5l1.5 1.5L6 3M2 12l1.5 1.5L6 10M2 19l1.5 1.5L6 17M9 5h13M9 12h13M9 19h13" size={26} w={1.4} />
        </div>
        <div className="-mt-[2px] ml-[23px] flex w-[30px] justify-center text-[#333]">
          <Line d="M7 9h10q2 0 2 2v9q0 2-2 2H7q-2 0-2-2v-9q0-2 2-2zM9 9V4q0-2 3-2t3 2v5M12 2v7" size={26} w={1.4} />
        </div>
        <div className="-mt-[2px] ml-[20px] flex w-[30px] justify-center text-[#333]">
          <CircleHelp className="h-[22px] w-[22px]" strokeWidth={1.5} />
        </div>
        <div className="-mt-[2px] ml-[20px] flex w-[30px] justify-center text-[#333]">
          <svg width="24" height="24" viewBox="0 0 24 24" fill="none" stroke="#333" strokeWidth="1.5">
            <circle cx="10" cy="6" r="4" />
            <path d="M8 22q-6 0-6-6 0-3 3-4" />
            <circle cx="16" cy="16" r="4" fill="#222" strokeWidth="3.5" strokeDasharray="2.5 1.5" />
            <circle cx="16" cy="16" r="1.5" fill="#fff" stroke="none" />
          </svg>
        </div>
        <div className="-mt-[2px] ml-[22px] mr-[24px] flex h-[48px] w-[48px] items-center justify-center rounded-full bg-[#b4009e] text-[24px] text-white">S</div>
      </header>
      <main className="relative flex min-h-0 flex-1">
        <Sidebar />
        <SuitesPanel />
        <RightPanel />
        <Menus />
      </main>
      <Taskbar />
    </div>
  );
}
